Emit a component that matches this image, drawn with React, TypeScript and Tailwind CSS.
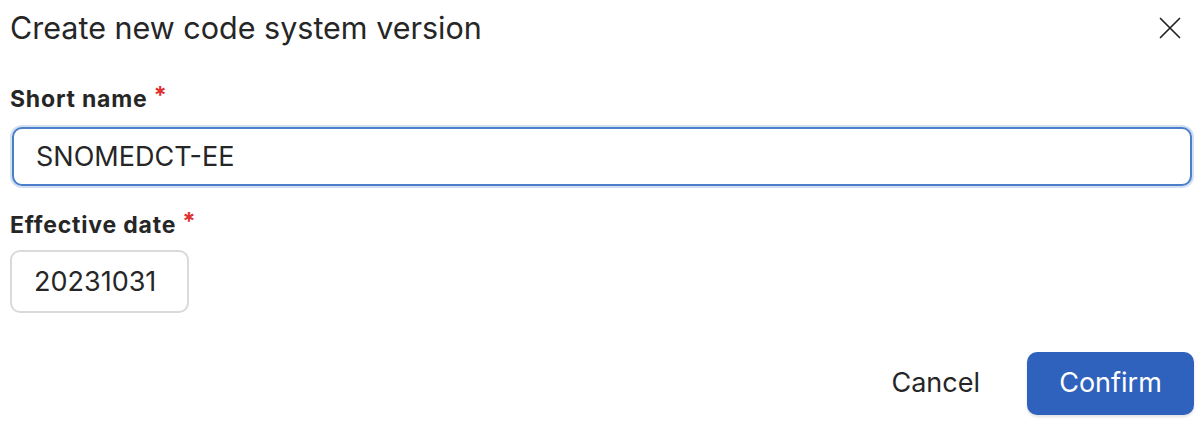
import React from 'react'

function CloseIcon(): JSX.Element {
  return (
    <svg
      viewBox="0 0 24 24"
      className="h-[24px] w-[24px]"
      fill="none"
      stroke="#222"
      strokeWidth={1.7}
      strokeLinecap="round"
    >
      <path d="M2.5 2.5l19 19M21.5 2.5l-19 19" />
    </svg>
  )
}

function Label({ children }: { children: React.ReactNode }): JSX.Element {
  return (
    <label className="flex items-start text-[23px] font-bold leading-[26px] tracking-[0.8px] text-[#262626]">
      {children}
      <span className="ml-[6px] -mt-[3px] text-[24px] text-[#e03131]">*</span>
    </label>
  )
}

export default function App(): JSX.Element {
  return (
    <div className="h-[430px] w-[1202px] bg-white font-['Inter',sans-serif] text-[#262626]">
      <div className="flex items-center justify-between pl-[10px] pr-[20px] pt-[10px]">
        <h1 className="text-[30.5px] font-normal leading-[36px] text-[#262626]">
          Create new code system version
        </h1>
        <CloseIcon />
      </div>

      <div className="flex flex-col pl-[10px] pr-[8px] pt-[40px]">
        <Label>Short name</Label>
        <div className="mt-[13px] rounded-[12px] bg-[#d3e0f3] p-[2px]">
          <input
            readOnly
            value="SNOMEDCT-EE"
            className="h-[59px] w-full rounded-[10px] border-2 border-[#4b7fca] bg-white px-[22px] text-[27px] text-[#262626] outline-none"
          />
        </div>

        <div className="mt-[24px]">
          <Label>Effective date</Label>
        </div>
        <input
          readOnly
          value="20231031"
          className="mt-[12px] h-[63px] w-[179px] rounded-[10px] border-2 border-[#dadada] bg-white px-[22px] text-[27px] text-[#262626] outline-none"
        />

        <div className="mt-[39px] flex items-center justify-end gap-[26px]">
          <button className="px-[21px] text-[27px] text-[#262626]">Cancel</button>
          <button className="h-[63px] w-[167px] rounded-[10px] bg-[#2f62bd] text-[27px] text-white shadow-[0_2px_3px_rgba(0,0,0,0.12)]">
            Confirm
          </button>
        </div>
      </div>
    </div>
  )
}
